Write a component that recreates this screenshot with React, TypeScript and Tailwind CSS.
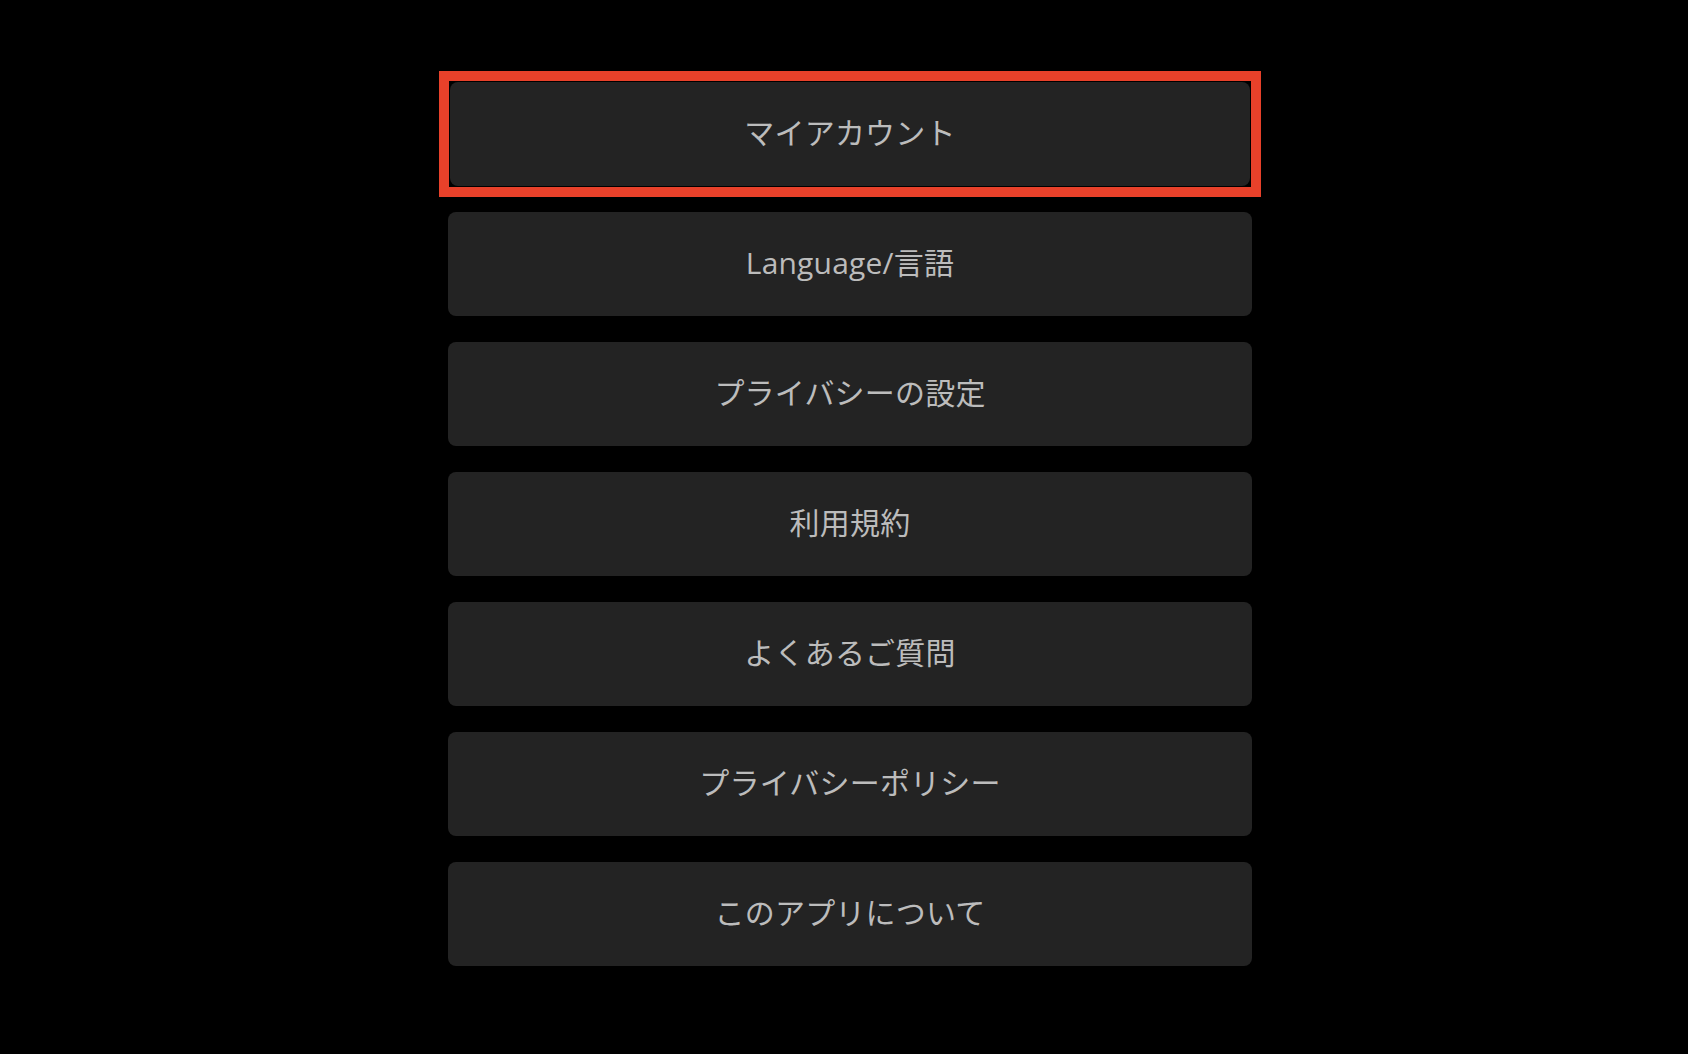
const items = [
  'Language/言語',
  'プライバシーの設定',
  '利用規約',
  'よくあるご質問',
  'プライバシーポリシー',
  'このアプリについて',
]

export default function App() {
  return (
    <div
      className="min-h-[1054px] w-full bg-black pt-[82px]"
      style={{ fontFamily: '"Open Sans", "Noto Sans CJK JP", sans-serif' }}
    >
      <div className="ml-[448px] flex w-[804px] flex-col gap-[26px]">
        <div className="relative mx-[2px]">
          <button className="flex h-[104px] w-full items-center justify-center rounded-[8px] bg-[#232323] pb-[4px] text-[30px] tracking-[0.2px] text-[#bcbcbc]">
            マイアカウント
          </button>
          <span className="pointer-events-none absolute -inset-[11px] border-[10px] border-[#e8412a]" />
        </div>
        {items.map((label) => (
          <button
            key={label}
            className="flex h-[104px] w-full items-center justify-center rounded-[8px] bg-[#232323] pb-[4px] text-[30px] tracking-[0.2px] text-[#bcbcbc]"
          >
            {label}
          </button>
        ))}
      </div>
    </div>
  )
}
